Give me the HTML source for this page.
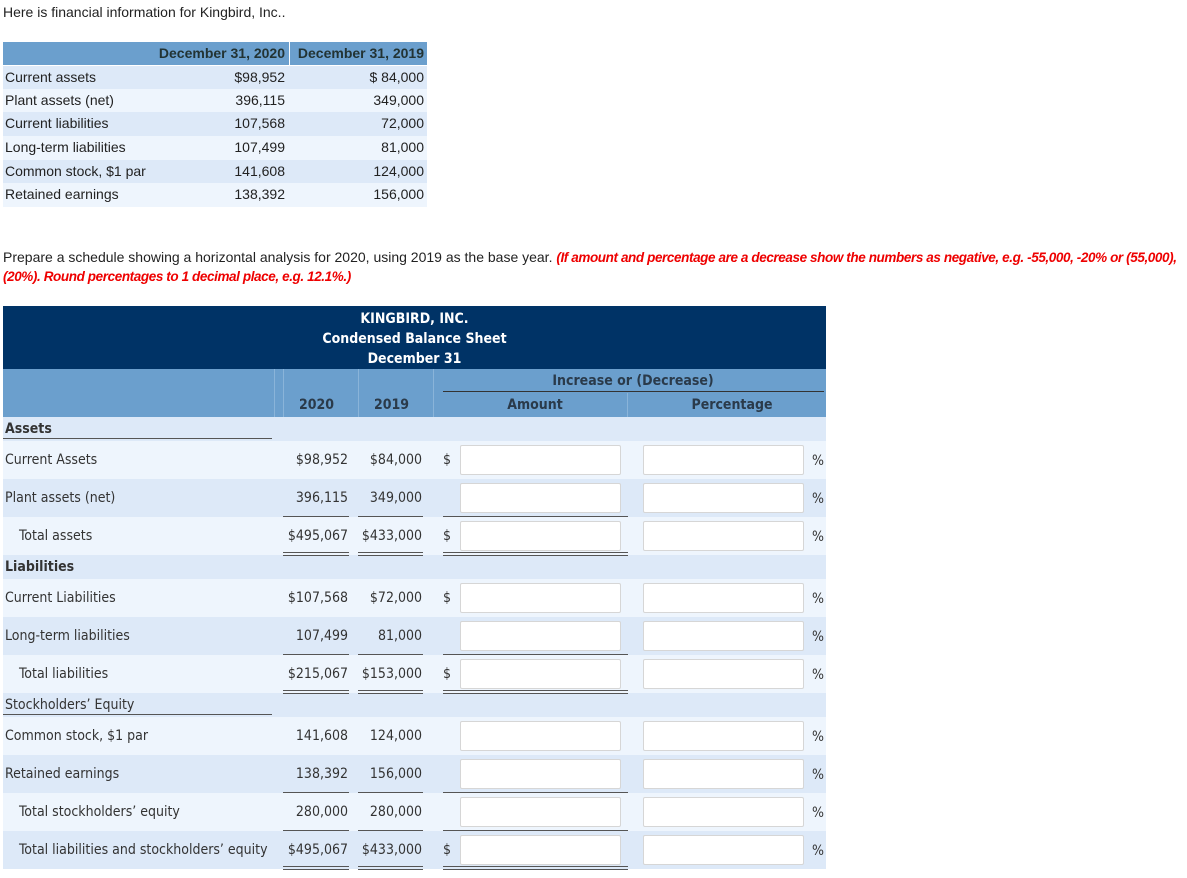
<!DOCTYPE html>
<html><head><meta charset="utf-8"><style>
*{margin:0;padding:0;box-sizing:border-box}
body{width:1187px;height:878px;background:#fff;position:relative;font-family:"Liberation Sans",sans-serif;color:#222;overflow:hidden}
.a{position:absolute;white-space:nowrap}
.t1{font-size:14px;line-height:23px}
.v{font-family:"DejaVu Sans Condensed","DejaVu Sans","Liberation Sans",sans-serif;font-size:14px;color:#333}
.r{text-align:right}
.inp{position:absolute;background:#fff;border:1px solid #d6d6d6;border-radius:2px;height:30px}
.ln{position:absolute;height:1px;background:#555}
.dl{position:absolute;height:4px;border-top:1px solid #555;border-bottom:1px solid #555}
</style></head><body>
<div class="a" style="left:3px;top:4px;font-size:14px">Here is financial information for Kingbird, Inc..</div>

<div class="a" style="left:3px;top:42px;width:424px;height:23px;background:#6b9fcd"></div>
<div class="a" style="left:289px;top:42px;width:1px;height:166px;background:#fff"></div>
<div class="a" style="left:3px;top:66px;width:424px;height:23px;background:#dde9f8"></div>
<div class="a" style="left:3px;top:89px;width:424px;height:23px;background:#eef5fd"></div>
<div class="a" style="left:3px;top:112px;width:424px;height:24px;background:#dde9f8"></div>
<div class="a" style="left:3px;top:136px;width:424px;height:24px;background:#eef5fd"></div>
<div class="a" style="left:3px;top:160px;width:424px;height:23px;background:#dde9f8"></div>
<div class="a" style="left:3px;top:183px;width:424px;height:24px;background:#eef5fd"></div>
<div class="a t1 r" style="left:140px;width:145px;top:42px;color:#233;font-weight:bold">December 31, 2020</div>
<div class="a t1 r" style="left:290px;width:134px;top:42px;color:#233;font-weight:bold">December 31, 2019</div>
<div class="a t1" style="left:5px;top:66px">Current assets</div><div class="a t1 r" style="left:150px;width:135px;top:66px">$98,952</div><div class="a t1 r" style="left:290px;width:134px;top:66px">$ 84,000</div>
<div class="a t1" style="left:5px;top:89px">Plant assets (net)</div><div class="a t1 r" style="left:150px;width:135px;top:89px">396,115</div><div class="a t1 r" style="left:290px;width:134px;top:89px">349,000</div>
<div class="a t1" style="left:5px;top:112px">Current liabilities</div><div class="a t1 r" style="left:150px;width:135px;top:112px">107,568</div><div class="a t1 r" style="left:290px;width:134px;top:112px">72,000</div>
<div class="a t1" style="left:5px;top:136px">Long-term liabilities</div><div class="a t1 r" style="left:150px;width:135px;top:136px">107,499</div><div class="a t1 r" style="left:290px;width:134px;top:136px">81,000</div>
<div class="a t1" style="left:5px;top:160px">Common stock, $1 par</div><div class="a t1 r" style="left:150px;width:135px;top:160px">141,608</div><div class="a t1 r" style="left:290px;width:134px;top:160px">124,000</div>
<div class="a t1" style="left:5px;top:183px">Retained earnings</div><div class="a t1 r" style="left:150px;width:135px;top:183px">138,392</div><div class="a t1 r" style="left:290px;width:134px;top:183px">156,000</div>

<div class="a" style="left:3px;top:248px;font-size:14px;line-height:19px">Prepare a schedule showing a horizontal analysis for 2020, using 2019 as the base year. <b style="color:#e00;font-style:italic;font-size:13.5px;letter-spacing:-0.4px">(If amount and percentage are a decrease show the numbers as negative, e.g. -55,000, -20% or (55,000),</b><br><b style="color:#e00;font-style:italic;font-size:13.5px;letter-spacing:-0.4px">(20%). Round percentages to 1 decimal place, e.g. 12.1%.)</b></div>

<div class="a" style="left:3px;top:306px;width:823px;height:63px;background:#003366"></div>
<div class="a v" style="left:3px;width:823px;top:309px;text-align:center;color:#fff;font-weight:bold;line-height:20px">KINGBIRD, INC.<br>Condensed Balance Sheet<br>December 31</div>
<div class="a" style="left:3px;top:369px;width:823px;height:48px;background:#6b9fcd"></div>
<div class="a" style="left:274px;top:369px;width:1px;height:48px;background:#8ab4d9"></div>
<div class="a" style="left:283px;top:369px;width:1px;height:48px;background:#8ab4d9"></div>
<div class="a" style="left:358px;top:369px;width:1px;height:48px;background:#8ab4d9"></div>
<div class="a" style="left:433px;top:369px;width:1px;height:48px;background:#8ab4d9"></div>
<div class="a" style="left:627px;top:393px;width:1px;height:24px;background:#8ab4d9"></div>
<div class="a v" style="left:443px;width:380px;top:373px;text-align:center;font-weight:bold;color:#2a3a4a">Increase or (Decrease)</div>
<div class="ln" style="left:443px;top:391px;width:381px;background:#333"></div>
<div class="a v" style="left:283px;width:67px;top:397px;text-align:center;font-weight:bold;color:#2a3a4a">2020</div>
<div class="a v" style="left:358px;width:67px;top:397px;text-align:center;font-weight:bold;color:#2a3a4a">2019</div>
<div class="a v" style="left:443px;width:184px;top:397px;text-align:center;font-weight:bold;color:#2a3a4a">Amount</div>
<div class="a v" style="left:640px;width:184px;top:397px;text-align:center;font-weight:bold;color:#2a3a4a">Percentage</div>

<div class="a" style="left:3px;top:417px;width:823px;height:24px;background:#dde9f8"></div>
<div class="a" style="left:3px;top:441px;width:823px;height:38px;background:#eef5fd"></div>
<div class="a" style="left:3px;top:479px;width:823px;height:38px;background:#dde9f8"></div>
<div class="a" style="left:3px;top:517px;width:823px;height:38px;background:#eef5fd"></div>
<div class="a" style="left:3px;top:555px;width:823px;height:24px;background:#dde9f8"></div>
<div class="a" style="left:3px;top:579px;width:823px;height:38px;background:#eef5fd"></div>
<div class="a" style="left:3px;top:617px;width:823px;height:38px;background:#dde9f8"></div>
<div class="a" style="left:3px;top:655px;width:823px;height:38px;background:#eef5fd"></div>
<div class="a" style="left:3px;top:693px;width:823px;height:24px;background:#dde9f8"></div>
<div class="a" style="left:3px;top:717px;width:823px;height:38px;background:#eef5fd"></div>
<div class="a" style="left:3px;top:755px;width:823px;height:38px;background:#dde9f8"></div>
<div class="a" style="left:3px;top:793px;width:823px;height:38px;background:#eef5fd"></div>
<div class="a" style="left:3px;top:831px;width:823px;height:38px;background:#dde9f8"></div>

<div class="a v" style="left:5px;top:421px;font-weight:bold">Assets</div><div class="ln" style="left:3px;top:438px;width:269px"></div>
<div class="a v" style="left:5px;top:559px;font-weight:bold">Liabilities</div>
<div class="a v" style="left:5px;top:697px">Stockholders’ Equity</div><div class="ln" style="left:3px;top:714px;width:269px"></div>

<div class="a v" style="left:5px;top:452px">Current Assets</div>
<div class="a v r" style="left:260px;width:88px;top:452px">$98,952</div><div class="a v r" style="left:340px;width:82px;top:452px">$84,000</div><div class="a v" style="left:443px;top:452px">$</div>
<div class="a v" style="left:5px;top:490px">Plant assets (net)</div>
<div class="a v r" style="left:260px;width:88px;top:490px">396,115</div><div class="a v r" style="left:340px;width:82px;top:490px">349,000</div>
<div class="a v" style="left:19px;top:528px">Total assets</div>
<div class="a v r" style="left:260px;width:88px;top:528px">$495,067</div><div class="a v r" style="left:340px;width:82px;top:528px">$433,000</div><div class="a v" style="left:443px;top:528px">$</div>

<div class="a v" style="left:5px;top:590px">Current Liabilities</div>
<div class="a v r" style="left:260px;width:88px;top:590px">$107,568</div><div class="a v r" style="left:340px;width:82px;top:590px">$72,000</div><div class="a v" style="left:443px;top:590px">$</div>
<div class="a v" style="left:5px;top:628px">Long-term liabilities</div>
<div class="a v r" style="left:260px;width:88px;top:628px">107,499</div><div class="a v r" style="left:340px;width:82px;top:628px">81,000</div>
<div class="a v" style="left:19px;top:666px">Total liabilities</div>
<div class="a v r" style="left:260px;width:88px;top:666px">$215,067</div><div class="a v r" style="left:340px;width:82px;top:666px">$153,000</div><div class="a v" style="left:443px;top:666px">$</div>

<div class="a v" style="left:5px;top:728px">Common stock, $1 par</div>
<div class="a v r" style="left:260px;width:88px;top:728px">141,608</div><div class="a v r" style="left:340px;width:82px;top:728px">124,000</div>
<div class="a v" style="left:5px;top:766px">Retained earnings</div>
<div class="a v r" style="left:260px;width:88px;top:766px">138,392</div><div class="a v r" style="left:340px;width:82px;top:766px">156,000</div>
<div class="a v" style="left:19px;top:804px">Total stockholders’ equity</div>
<div class="a v r" style="left:260px;width:88px;top:804px">280,000</div><div class="a v r" style="left:340px;width:82px;top:804px">280,000</div>
<div class="a v" style="left:19px;top:842px">Total liabilities and stockholders’ equity</div>
<div class="a v r" style="left:260px;width:88px;top:842px">$495,067</div><div class="a v r" style="left:340px;width:82px;top:842px">$433,000</div><div class="a v" style="left:443px;top:842px">$</div>

<div class="inp" style="left:460px;top:445px;width:161px"></div><div class="inp" style="left:643px;top:445px;width:161px"></div><div class="a v" style="left:812px;top:453px">%</div>
<div class="inp" style="left:460px;top:483px;width:161px"></div><div class="inp" style="left:643px;top:483px;width:161px"></div><div class="a v" style="left:812px;top:491px">%</div>
<div class="inp" style="left:460px;top:521px;width:161px"></div><div class="inp" style="left:643px;top:521px;width:161px"></div><div class="a v" style="left:812px;top:529px">%</div>
<div class="inp" style="left:460px;top:583px;width:161px"></div><div class="inp" style="left:643px;top:583px;width:161px"></div><div class="a v" style="left:812px;top:591px">%</div>
<div class="inp" style="left:460px;top:621px;width:161px"></div><div class="inp" style="left:643px;top:621px;width:161px"></div><div class="a v" style="left:812px;top:629px">%</div>
<div class="inp" style="left:460px;top:659px;width:161px"></div><div class="inp" style="left:643px;top:659px;width:161px"></div><div class="a v" style="left:812px;top:667px">%</div>
<div class="inp" style="left:460px;top:721px;width:161px"></div><div class="inp" style="left:643px;top:721px;width:161px"></div><div class="a v" style="left:812px;top:729px">%</div>
<div class="inp" style="left:460px;top:759px;width:161px"></div><div class="inp" style="left:643px;top:759px;width:161px"></div><div class="a v" style="left:812px;top:767px">%</div>
<div class="inp" style="left:460px;top:797px;width:161px"></div><div class="inp" style="left:643px;top:797px;width:161px"></div><div class="a v" style="left:812px;top:805px">%</div>
<div class="inp" style="left:460px;top:835px;width:161px"></div><div class="inp" style="left:643px;top:835px;width:161px"></div><div class="a v" style="left:812px;top:843px">%</div>

<div class="ln" style="left:283px;top:516px;width:66px"></div><div class="ln" style="left:358px;top:516px;width:65px"></div><div class="ln" style="left:443px;top:516px;width:185px"></div>
<div class="dl" style="left:283px;top:552px;width:66px"></div><div class="dl" style="left:358px;top:552px;width:65px"></div><div class="dl" style="left:443px;top:552px;width:185px"></div>
<div class="ln" style="left:283px;top:654px;width:66px"></div><div class="ln" style="left:358px;top:654px;width:65px"></div><div class="ln" style="left:443px;top:654px;width:185px"></div>
<div class="dl" style="left:283px;top:690px;width:66px"></div><div class="dl" style="left:358px;top:690px;width:65px"></div><div class="dl" style="left:443px;top:690px;width:185px"></div>
<div class="ln" style="left:283px;top:792px;width:66px"></div><div class="ln" style="left:358px;top:792px;width:65px"></div><div class="ln" style="left:443px;top:792px;width:185px"></div>
<div class="ln" style="left:283px;top:830px;width:66px"></div><div class="ln" style="left:358px;top:830px;width:65px"></div><div class="ln" style="left:443px;top:830px;width:185px"></div>
<div class="dl" style="left:283px;top:866px;width:66px"></div><div class="dl" style="left:358px;top:866px;width:65px"></div><div class="dl" style="left:443px;top:866px;width:185px"></div>
</body></html>
